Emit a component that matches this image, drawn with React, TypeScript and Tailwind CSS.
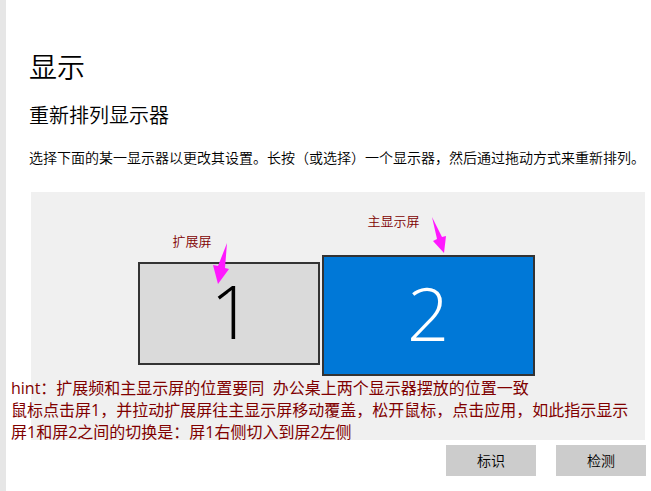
import React from "react";

export default function App() {
  return (
    <div className="flex min-h-screen overflow-hidden bg-white font-['Open_Sans','Noto_Sans_CJK_SC',sans-serif] font-[350] text-black">
      <div className="w-1.5 shrink-0 bg-[#e6e6e6]" />
      <main className="min-w-0 flex-1 pt-[47px] pr-[5px] pb-4">
        <header className="pl-[23px]">
          <h1 className="text-[28px] leading-10 font-[350]">显示</h1>
          <h2 className="mt-[15px] text-xl leading-7 font-[350]">重新排列显示器</h2>
          <p className="mt-[18px] text-sm leading-5 whitespace-nowrap">
            选择下面的某一显示器以更改其设置。长按（或选择）一个显示器，然后通过拖动方式来重新排列。
          </p>
        </header>

        <section className="relative mt-6 mr-px ml-[25px] h-[248px] bg-[#f0f0f0] pt-[63px] pr-1">
          <div className="relative mx-auto flex w-[397px] items-start gap-0.5">
            <button
              type="button"
              className="mt-[7px] flex h-[103px] w-[182px] items-center justify-center border-2 border-[#333] bg-[#dadada] pb-1.5 pl-1.5 text-[74px] leading-none font-light"
            >
              1
            </button>
            <button
              type="button"
              className="flex h-[121px] w-[213px] items-center justify-center border-2 border-[#333] bg-[#0078d7] pb-1.5 text-[74px] leading-none font-light text-white"
            >
              2
            </button>
            <span className="absolute -top-6 left-[35px] text-[13px] leading-5 text-[#800000]">扩展屏</span>
            <span className="absolute -top-11 left-[230px] text-[13px] leading-5 text-[#800000]">主显示屏</span>
            <svg className="absolute -top-3 left-[74px] h-[42px] w-5" viewBox="0 0 20 42" aria-hidden="true">
              <path d="M15 0 L13 25 L17 26 L6 41 L1 22 L6 23 Z" fill="#ff19ff" />
            </svg>
            <svg className="absolute -top-[38px] left-[292px] h-9 w-5" viewBox="0 0 20 36" aria-hidden="true">
              <path d="M2 0 L12 20 L16 19 L14 36 L3 24 L7 22 Z" fill="#ff19ff" />
            </svg>
          </div>
          <p className="absolute -left-5 bottom-[-3px] text-base leading-[22px] font-normal whitespace-pre text-[#800000]">
            hint：扩展频和主显示屏的位置要同{"  "}办公桌上两个显示器摆放的位置一致
            <br />
            鼠标点击屏1，并拉动扩展屏往主显示屏移动覆盖，松开鼠标，点击应用，如此指示显示
            <br />
            屏1和屏2之间的切换是：屏1右侧切入到屏2左侧
          </p>
        </section>

        <div className="mt-[5px] flex justify-end gap-5">
          <button type="button" className="h-[31px] w-[90px] bg-[#ccc] text-sm">
            标识
          </button>
          <button type="button" className="h-[31px] w-[90px] bg-[#ccc] text-sm">
            检测
          </button>
        </div>
      </main>
    </div>
  );
}
